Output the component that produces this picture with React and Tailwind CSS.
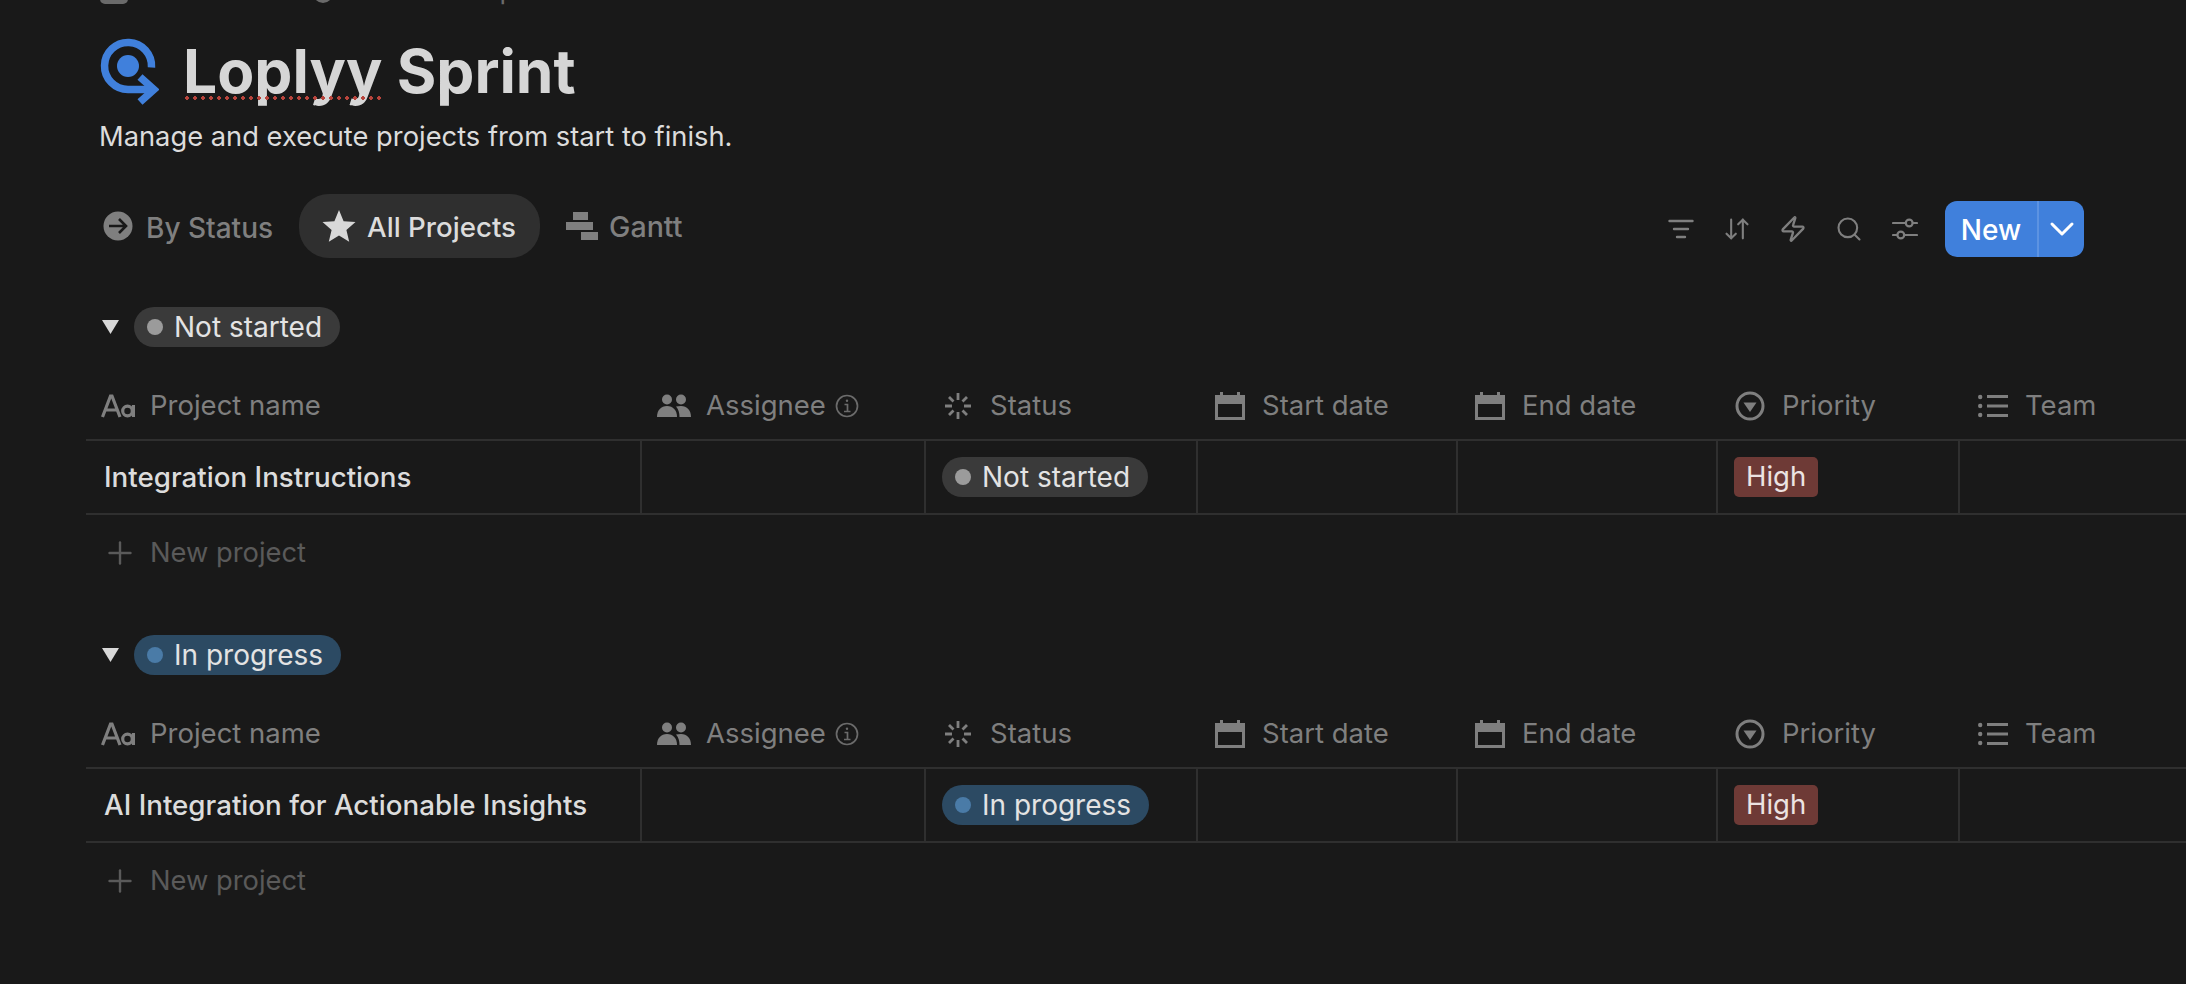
import { ChevronDown, Plus, Zap, Search, ArrowDownUp } from "lucide-react";

const gridCols = "grid grid-cols-[556px_284px_272px_260px_260px_242px_1fr]";

function LogoIcon() {
  return (
    <svg width="60" height="68" viewBox="0 0 60 68" fill="none" stroke="#4080dc" strokeWidth="7.5">
      <path d="M52.5 30.5A23.5 23.5 0 1 0 29 52.5H54" />
      <path d="M41 40L55 52.5L41 65" />
      <circle cx="29" cy="29" r="11" fill="#4080dc" stroke="none" />
    </svg>
  );
}

function ArrowCircleIcon() {
  return (
    <svg width="30" height="30" viewBox="0 0 30 30">
      <circle cx="15" cy="15" r="14.5" fill="#7f7f7f" />
      <path d="M6 15H23M16 8L23 15L16 22" fill="none" stroke="#191919" strokeWidth="2.6" />
    </svg>
  );
}

function StarIcon() {
  return (
    <svg width="34" height="34" viewBox="0 0 34 34" fill="#d8d8d8">
      <path d="M17 1L21.6 12.2L33.5 13.1L24.4 20.9L27.2 32.7L17 26.4L6.8 32.7L9.6 20.9L0.5 13.1L12.4 12.2Z" />
    </svg>
  );
}

function GanttIcon() {
  return (
    <svg width="32" height="28" viewBox="0 0 32 28" fill="#7f7f7f">
      <rect x="7" y="0" width="15" height="8" />
      <rect x="0" y="10" width="27" height="8" />
      <rect x="15" y="20" width="17" height="8" />
    </svg>
  );
}

function AaIcon() {
  return (
    <svg width="34" height="24" viewBox="0 0 34 24" fill="none" stroke="#7f7f7f" strokeWidth="3.2">
      <path d="M1.5 23L9.5 2H11L19 23M4.5 16H16" />
      <circle cx="26.5" cy="17" r="4.8" />
      <path d="M32.5 11V23" />
    </svg>
  );
}

function PeopleIcon() {
  return (
    <svg width="34" height="24" viewBox="0 0 34 24" fill="#7f7f7f">
      <circle cx="10" cy="5.5" r="5" />
      <circle cx="24" cy="5.5" r="5" />
      <path d="M0 23C0 16 4 12 10 12C16 12 20 16 20 23Z" />
      <path d="M19 12.6C20.5 12.2 22 12 24 12C30 12 34 16 34 23H22.5C22.5 19 21.5 15.5 19 12.6Z" />
    </svg>
  );
}

function InfoIcon() {
  return (
    <svg width="24" height="24" viewBox="0 0 24 24" fill="none" stroke="#6b6b6b" strokeWidth="1.7">
      <circle cx="12" cy="12" r="10.5" />
      <path d="M9.5 10.5H12.5V17.5M9 17.5H15.5" />
      <circle cx="12" cy="6.8" r="1.2" fill="#6b6b6b" stroke="none" />
    </svg>
  );
}

function SpinnerIcon() {
  return (
    <svg width="28" height="28" viewBox="0 0 28 28" fill="none" stroke="#7f7f7f" strokeWidth="2.8">
      <path d="M14 1V8M14 20V27M1 14H8M20 14H27M5 5L9.5 9.5M18.5 18.5L23 23M23 5L18.5 9.5M9.5 18.5L5 23" />
    </svg>
  );
}

function CalendarIcon() {
  return (
    <svg width="30" height="28" viewBox="0 0 30 28" fill="#7f7f7f">
      <path d="M0 3H5V0H8V3H22V0H25V3H30V28H0ZM3 12V25H27V12Z" fillRule="evenodd" />
    </svg>
  );
}

function SelectIcon() {
  return (
    <svg width="30" height="30" viewBox="0 0 30 30" fill="none">
      <circle cx="15" cy="15" r="13" stroke="#7f7f7f" strokeWidth="3" />
      <path d="M8.5 11.5H21.5L15 21Z" fill="#7f7f7f" />
    </svg>
  );
}

function ListIcon() {
  return (
    <svg width="30" height="24" viewBox="0 0 30 24" fill="#7f7f7f">
      <circle cx="2.2" cy="3" r="2.2" />
      <circle cx="2.2" cy="12" r="2.2" />
      <circle cx="2.2" cy="21" r="2.2" />
      <rect x="9" y="1" width="21" height="3" />
      <rect x="9" y="10.5" width="21" height="3" />
      <rect x="9" y="20" width="21" height="3" />
    </svg>
  );
}

function FilterIcon() {
  return (
    <svg width="26" height="20" viewBox="0 0 26 20" fill="none" stroke="#7f7f7f" strokeWidth="2.4" strokeLinecap="round">
      <path d="M1.5 2H24.5M6 10H20M9 18H17" />
    </svg>
  );
}

function SlidersIcon() {
  return (
    <svg width="26" height="22" viewBox="0 0 26 22" fill="none" stroke="#7f7f7f" strokeWidth="2.2" strokeLinecap="round">
      <path d="M1 5H13.5M21 5H25M1 17H5M12.5 17H25" />
      <circle cx="17.2" cy="5" r="3.4" />
      <circle cx="8.8" cy="17" r="3.4" />
    </svg>
  );
}

const columns = [
  { name: "Project name", icon: <AaIcon />, cls: "pl-[15px] gap-[15px]" },
  { name: "Assignee", icon: <PeopleIcon />, cls: "pl-[15px] gap-[15px]", info: true },
  { name: "Status", icon: <SpinnerIcon />, cls: "pl-[18px] gap-[18px]" },
  { name: "Start date", icon: <CalendarIcon />, cls: "pl-[17px] gap-[17px]" },
  { name: "End date", icon: <CalendarIcon />, cls: "pl-[17px] gap-[17px]" },
  { name: "Priority", icon: <SelectIcon />, cls: "pl-[17px] gap-[17px]" },
  { name: "Team", icon: <ListIcon />, cls: "pl-[18px] gap-[17px]" },
];

function StatusPill({ label, bg, dot, className }) {
  return (
    <span className={`flex h-10 items-center rounded-full pl-[13px] pr-[18px] gap-[11px] text-[28px] text-[#e3e3e3] ${bg} ${className}`}>
      <span className={`h-4 w-4 rounded-full ${dot}`} />
      {label}
    </span>
  );
}

function Group({ label, bg, dot, project, className }) {
  return (
    <section className={className}>
      <div className="flex h-10 items-center pl-4">
        <svg width="17" height="14" viewBox="0 0 17 14" fill="#d8d8d8">
          <path d="M0 0H17L8.5 14Z" />
        </svg>
        <StatusPill label={label} bg={bg} dot={dot} className="ml-[15px]" />
      </div>

      <div className={`${gridCols} mt-[26px] h-[68px] border-b-2 border-[#2f2f2f]`}>
        {columns.map((col) => (
          <div key={col.name} className={`flex items-center text-[27.5px] text-[#7f7f7f] ${col.cls}`}>
            {col.icon}
            <span>{col.name}</span>
            {col.info && <span className="-ml-[6px] flex"><InfoIcon /></span>}
          </div>
        ))}
      </div>

      <div className={`${gridCols} h-[74px] border-b-2 border-[#2f2f2f]`}>
        <div className="flex items-center border-r-2 border-[#2f2f2f] pl-[18px] pt-[2px] text-[27.75px] font-medium text-[#dcdcdc]">
          {project}
        </div>
        <div className="border-r-2 border-[#2f2f2f]" />
        <div className="flex items-center border-r-2 border-[#2f2f2f] pl-[16px]">
          <StatusPill label={label} bg={bg} dot={dot} />
        </div>
        <div className="border-r-2 border-[#2f2f2f]" />
        <div className="border-r-2 border-[#2f2f2f]" />
        <div className="flex items-center border-r-2 border-[#2f2f2f] pl-[16px]">
          <span className="flex h-10 items-center rounded-[5px] bg-[#6e3a36] px-3 text-[27.5px] text-[#ece3e2]">High</span>
        </div>
        <div />
      </div>

      <div className="flex h-[74px] items-center gap-[12px] pl-[16px] pt-[2px] text-[27.3px] text-[#5a5a5a]">
        <Plus size={36} strokeWidth={1.6} color="#5a5a5a" />
        New project
      </div>
    </section>
  );
}

export default function App() {
  return (
    <div className="h-[984px] overflow-hidden bg-[#191919] pl-[86px] font-['Inter',sans-serif]">
      {/* row cut off by the top of the shot */}
      <div className="-mt-[32px] flex h-[36px] items-end pl-[14px] text-[27px] leading-[36px] text-[#6a6a6a]">
        <span className="h-[30px] w-[28px] rounded-[5px] bg-[#6a6a6a]" />
        <span className="ml-[30px] translate-y-[4px]">Add cover</span>
        <span className="mb-[1px] ml-[24px] h-[30px] w-[20px] rounded-full bg-[#6a6a6a]" />
        <span className="ml-[21px] translate-y-[4px]">Hide description</span>
      </div>

      <div className="mt-[32px] flex h-[70px] items-center pl-[13px]">
        <LogoIcon />
        <h1 className="relative ml-[24px] text-[60.5px] font-bold leading-[70px] text-[#d6d6d6]">
          Loplyy Sprint
          <span className="absolute left-0 top-[60px] h-1 w-[199px] bg-[radial-gradient(circle,#b8443c_1.6px,transparent_2px)] bg-[length:8px_4px] bg-repeat-x" />
        </h1>
      </div>

      <p className="mt-[11px] flex h-10 items-center pl-[13px] text-[27.3px] text-[#dcdcdc]">
        Manage and execute projects from start to finish.
      </p>

      <div className="mt-[37px] flex h-16 items-center pr-[102px]">
        <div className="flex items-center pl-[17px] text-[28px] font-medium text-[#7f7f7f]">
          <ArrowCircleIcon />
          <span className="ml-[13px] pt-[3px]">By Status</span>
          <div className="ml-[26px] flex h-16 items-center gap-[11px] rounded-[30px] bg-[#2f2f2f] pl-[23px] pr-[24px] text-[27.7px] text-[#dcdcdc]">
            <StarIcon />
            <span className="pt-[3px]">All Projects</span>
          </div>
          <span className="ml-[26px] flex"><GanttIcon /></span>
          <span className="ml-[11px] pt-[3px] text-[28.6px]">Gantt</span>
        </div>

        <div className="ml-auto flex items-center gap-[28px] pt-[6px] text-[#7f7f7f]">
          <span className="flex w-7 justify-center"><FilterIcon /></span>
          <span className="flex w-7 justify-center"><ArrowDownUp size={36} strokeWidth={1.8} /></span>
          <span className="flex w-7 justify-center"><Zap size={30} strokeWidth={2} /></span>
          <span className="flex w-7 justify-center"><Search size={34} strokeWidth={1.8} /></span>
          <span className="flex w-7 justify-center"><SlidersIcon /></span>
          <div className="-ml-[2px] flex h-14 w-[139px] items-stretch overflow-hidden rounded-[12px] bg-[#4080dc] text-white">
            <span className="flex w-[92px] items-center justify-center pt-[2px] text-[28px] font-medium">New</span>
            <span className="flex flex-1 items-center justify-center border-l-2 border-[#5c93e2]">
              <ChevronDown size={40} strokeWidth={1.8} />
            </span>
          </div>
        </div>
      </div>

      <Group
        className="mt-[49px]"
        label="Not started"
        bg="bg-[#3a3a3a]"
        dot="bg-[#9b9b9b]"
        project="Integration Instructions"
      />
      <Group
        className="mt-[46px]"
        label="In progress"
        bg="bg-[#2c4a63]"
        dot="bg-[#4a7ba7]"
        project="AI Integration for Actionable Insights"
      />
    </div>
  );
}
